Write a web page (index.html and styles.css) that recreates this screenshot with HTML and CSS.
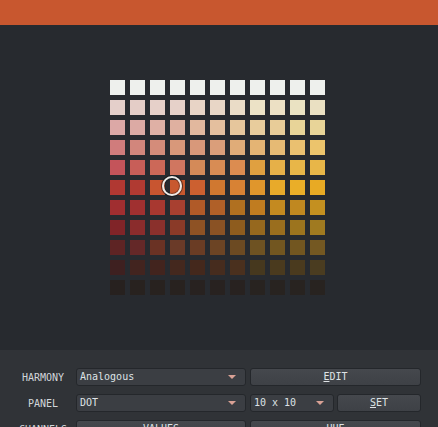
FILE: index.html
```html
<!DOCTYPE html>
<html lang="en">
<head>
  <meta charset="UTF-8">
  <meta name="viewport" content="width=device-width, initial-scale=1.0">
  <title>Palette</title>
  <link rel="stylesheet" href="styles.css">
</head>
<body>
  <div class="titlebar"></div>

  <!-- Swatch grid -->
  <div class="canvas">
    <div id="swatches" class="swatches">
      <div class="picker"></div>
    </div>
  </div>

  <!-- Controls -->
  <div class="panel">
    <div class="row">
      <span class="label">HARMONY</span>
      <div class="select wide">Analogous<span class="arrow"></span></div>
      <div class="button wide-btn"><u>E</u>DIT</div>
    </div>
    <div class="row">
      <span class="label">PANEL</span>
      <div class="select wide">DOT<span class="arrow"></span></div>
      <div class="select small">10 x 10<span class="arrow"></span></div>
      <div class="button small set"><u>S</u>ET</div>
    </div>
    <div class="row">
      <span class="label">CHANNELS</span>
      <div class="button wide">VALUES</div>
      <div class="button wide-btn">HUE</div>
    </div>
  </div>

  <script>
    // swatch colours, top row (light) to bottom row (dark)
    const rows = [
      ["#eef0ed","#eef0ed","#eef0ed","#eef0ed","#eef0ed","#eef0ed","#eef0ed","#eef0ed","#eef0ed","#eef0ed","#eef0ed"],
      ["#e4cfca","#e4cdc7","#e6d0c9","#e6d1c9","#e8d4c6","#e8d6c6","#eadcc7","#ece2c6","#ece0c4","#eae2c2","#eae0c2"],
      ["#dca8a6","#dcaaa4","#dfb0a5","#dfb0a0","#e2b89e","#e4bf9e","#e6c69c","#e8cc9c","#e8cc98","#e8d498","#e8d498"],
      ["#d07c7c","#d2867c","#d48c7a","#d8987a","#d8987a","#da9e7a","#e0ac78","#e4b474","#e6ba74","#eac070","#ecc46c"],
      ["#c4545a","#c85e58","#cc6858","#d07660","#d48a58","#d88c54","#dc8c50","#e0a040","#e6b048","#e8b648","#e8b648"],
      ["#b03832","#b03a32","#c85530","#c8582e","#cc6030","#d07830","#d88234","#e0962c","#e8aa2a","#eaae28","#e8aa24"],
      ["#a02e30","#a03030","#a83830","#a84030","#b05a28","#b06028","#b07020","#c07c20","#c48a20","#c08820","#c49020"],
      ["#802428","#8a2c2c","#8a302c","#8a3a28","#8e5224","#8a5224","#8e5c1e","#96681e","#9a6e1e","#9c741e","#a07a20"],
      ["#5e2424","#642828","#6a3224","#6a3a28","#6a3c24","#6c4424","#6c4a22","#6e5222","#725620","#725620","#745822"],
      ["#3e2020","#42241f","#42241e","#44281e","#44281c","#462c1e","#4a301e","#46381e","#4a3a1e","#4a3a1e","#4a3c20"],
      ["#27211f","#28221f","#28221f","#28221f","#282220","#282220","#282220","#282320","#282320","#282320","#282320"]
    ];

    const grid = document.getElementById("swatches");
    rows.forEach(row => {
      row.forEach(color => {
        const cell = document.createElement("div");
        cell.classList.add("swatch");
        cell.style.backgroundColor = color;
        grid.appendChild(cell);
      });
    });
  </script>
</body>
</html>
```

FILE: styles.css
```css
body {
  margin: 0;
  width: 438px;
  height: 427px;
  overflow: hidden;
  font-family: "DejaVu Sans Mono", monospace;
  font-size: 10px;
  background-color: #272a2f;
  color: #dfe3e6;
}

.titlebar {
  height: 25px;
  background-color: #c8572f;
}

.canvas {
  height: 325px;
  display: flex;
  justify-content: center;
  align-items: center;
  padding-right: 3px;
  background-color: #272a2f;
}

.swatches {
  position: relative;
  display: grid;
  grid-template-columns: repeat(11, 15px);
  grid-auto-rows: 15px;
  gap: 5px;
}

.picker {
  position: absolute;
  left: 52px;
  top: 96px;
  width: 16px;
  height: 16px;
  border: 2px solid #ecebe8;
  border-radius: 50%;
  box-shadow: 0 0 0 1px rgba(20, 20, 22, 0.6), inset 0 0 0 1px rgba(20, 20, 22, 0.4);
  z-index: 1;
}

.panel {
  height: 77px;
  background-color: #303337;
  padding: 18px 0 0 10px;
  box-sizing: border-box;
}

.row {
  display: flex;
  align-items: center;
  height: 18px;
  margin-bottom: 8px;
}

.label {
  width: 66px;
  text-align: center;
  color: #d2d6da;
}

.select, .button {
  box-sizing: border-box;
  height: 18px;
  line-height: 16px;
  border: 1px solid #24272b;
  border-radius: 3px;
  margin-right: 4px;
  white-space: nowrap;
}

.select {
  position: relative;
  background-color: #3b3e43;
  padding-left: 3px;
}

.button {
  background: linear-gradient(#45484d, #3e4146);
  text-align: center;
}

.button u {
  text-underline-offset: 1px;
}

.wide {
  width: 170px;
}

.wide-btn {
  width: 171px;
}

.small {
  width: 84px;
}

.set {
  margin-left: -1px;
}

.arrow {
  position: absolute;
  right: 9px;
  top: 6px;
  width: 0;
  height: 0;
  border-left: 4.5px solid transparent;
  border-right: 4.5px solid transparent;
  border-top: 4px solid #d9a195;
}
```
